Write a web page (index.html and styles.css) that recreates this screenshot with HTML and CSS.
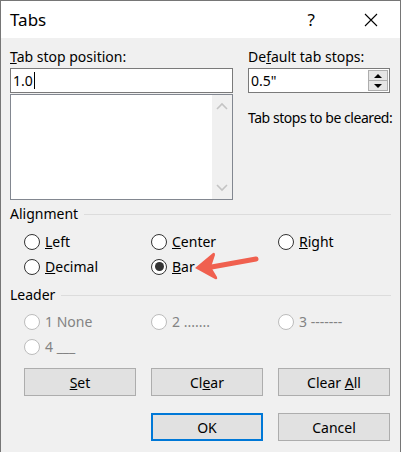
FILE: index.html
```html
<!DOCTYPE html>
<html>
<head>
<meta charset="utf-8">
<link rel="stylesheet" href="styles.css">
</head>
<body>
<div class="dialog">
  <div class="titlebar">
    <span class="title">Tabs</span>
    <span class="help">?</span>
    <svg class="close" width="14" height="14" viewBox="0 0 14 14"><path d="M1 1 L13 13 M13 1 L1 13" stroke="#000" stroke-width="1.1" fill="none"/></svg>
  </div>
  <div class="content">
    <div class="top">
      <div class="col-left">
        <div class="label"><u>T</u>ab stop position:</div>
        <div class="textbox"><span>1.0</span><span class="caret"></span></div>
        <div class="listbox">
          <div class="list-area"></div>
          <div class="scrollbar">
            <svg width="12" height="8" viewBox="0 0 12 8"><path d="M1 7 L6 2 L11 7" stroke="#c4c4c4" stroke-width="1.6" fill="none"/></svg>
            <svg width="12" height="8" viewBox="0 0 12 8"><path d="M1 1 L6 6 L11 1" stroke="#c4c4c4" stroke-width="1.6" fill="none"/></svg>
          </div>
        </div>
      </div>
      <div class="col-right">
        <div class="label">De<u>f</u>ault tab stops:</div>
        <div class="spinbox">
          <span class="spin-value">0.5"</span>
          <div class="spin-buttons">
            <div class="spin-btn"><span class="tri-up"></span></div>
            <div class="spin-btn"><span class="tri-down"></span></div>
          </div>
        </div>
        <div class="cleared">Tab stops to be cleared:</div>
      </div>
    </div>

    <div class="group-header align-header"><span>Alignment</span><div class="rule"></div></div>
    <div class="radio-grid">
      <label class="radio"><span class="circle"></span><span><u>L</u>eft</span></label>
      <label class="radio"><span class="circle"></span><span><u>C</u>enter</span></label>
      <label class="radio"><span class="circle"></span><span><u>R</u>ight</span></label>
      <label class="radio"><span class="circle"></span><span><u>D</u>ecimal</span></label>
      <label class="radio"><span class="circle checked"></span><span><u>B</u>ar</span></label>
    </div>

    <div class="group-header leader-header"><span>Leader</span><div class="rule"></div></div>
    <div class="radio-grid disabled">
      <label class="radio"><span class="circle"></span><span>1 None</span></label>
      <label class="radio"><span class="circle"></span><span>2 .......</span></label>
      <label class="radio"><span class="circle"></span><span>3 -------</span></label>
      <label class="radio"><span class="circle"></span><span>4 ___</span></label>
    </div>

    <div class="button-grid row1">
      <div class="btn"><span><u>S</u>et</span></div>
      <div class="btn"><span>Cl<u>e</u>ar</span></div>
      <div class="btn"><span>Clear <u>A</u>ll</span></div>
    </div>
    <div class="button-grid row2">
      <div></div>
      <div class="btn default"><span>OK</span></div>
      <div class="btn"><span>Cancel</span></div>
    </div>
  </div>
  <svg class="arrow" width="80" height="40" viewBox="0 0 80 40">
    <path d="M66 10 L16 19" stroke="#f0604f" stroke-width="5" stroke-linecap="round" fill="none"/>
    <path d="M5 19 L23 4 Q25 3 25 6 L21 18 L27 28 Q28 31 25 30 Z" fill="#f0604f"/>
  </svg>
</div>
</body>
</html>
```

FILE: styles.css
```css
* { box-sizing: border-box; }
html, body { margin: 0; padding: 0; background: #f0f0f0; }
body {
  font-family: "Noto Sans", "Open Sans", sans-serif;
  font-size: 14px;
  color: #000;
}
.dialog {
  position: relative;
  width: 401px;
  height: 452px;
  border: 1px solid #767676;
  border-bottom: none;
  background: #f0f0f0;
  overflow: hidden;
}
.titlebar {
  height: 37px;
  background: #fff;
  display: flex;
  align-items: center;
  padding-left: 9px;
}
.title { font-size: 17px; flex: 1; }
.help { font-size: 17px; margin-right: 49px; }
.close { margin-right: 22px; }

.content { padding: 10px 9px 0 9px; }
.top { display: flex; gap: 15px; }
.col-left { width: 223px; }
.col-right { width: 142px; }
.label { height: 18px; line-height: 18px; margin-bottom: 2px; }
.textbox {
  height: 25px;
  background: #fff;
  border: 1px solid #7a7a7a;
  display: flex;
  align-items: center;
  padding-left: 2px;
}
.caret { display: inline-block; width: 1px; height: 17px; background: #000; margin-left: 1px; }
.listbox {
  margin-top: 1px;
  height: 106px;
  border: 1px solid #828790;
  background: #fff;
  display: flex;
}
.list-area { flex: 1; }
.scrollbar {
  width: 20px;
  background: #f0f0f0;
  display: flex;
  flex-direction: column;
  justify-content: space-between;
  align-items: center;
  padding: 7px 0 7px;
}
.spinbox {
  height: 25px;
  background: #fff;
  border: 1px solid #7a7a7a;
  display: flex;
  align-items: center;
  padding-left: 2px;
}
.spin-value { flex: 1; }
.spin-buttons {
  width: 21px;
  height: 23px;
  display: flex;
  flex-direction: column;
  padding: 1px 1px 1px 0;
}
.spin-btn {
  flex: 1;
  background: #e5e5e5;
  border: 1px solid #adadad;
  display: flex;
  align-items: center;
  justify-content: center;
}
.spin-btn + .spin-btn { border-top: none; }
.tri-up { width: 0; height: 0; border-left: 4px solid transparent; border-right: 4px solid transparent; border-bottom: 4px solid #000; }
.tri-down { width: 0; height: 0; border-left: 4px solid transparent; border-right: 4px solid transparent; border-top: 4px solid #000; }
.cleared { margin-top: 16px; line-height: 18px; white-space: nowrap; letter-spacing: -0.45px; }

.group-header {
  display: flex;
  align-items: center;
  height: 18px;
  line-height: 18px;
  gap: 6px;
}
.group-header .rule { flex: 1; border-top: 1px solid #dcdcdc; }
.align-header { margin-top: 5px; }
.leader-header { margin-top: 7px; }

.radio-grid {
  display: grid;
  grid-template-columns: 112px 112px 112px;
  column-gap: 15px;
  grid-auto-rows: 25px;
  padding-left: 14px;
  margin-top: 6px;
}
.leader-header + .radio-grid { margin-top: 5px; }
.radio { display: flex; align-items: center; gap: 5px; }
.circle {
  width: 16px;
  height: 16px;
  border-radius: 50%;
  border: 1px solid #333;
  background: #fff;
  display: flex;
  align-items: center;
  justify-content: center;
}
.circle.checked::after {
  content: "";
  width: 9px;
  height: 9px;
  border-radius: 50%;
  background: #333;
}
.disabled .radio { color: #838383; }
.disabled .circle { border-color: #bcbcbc; }

.button-grid {
  display: grid;
  grid-template-columns: 112px 112px 112px;
  column-gap: 15px;
  padding-left: 14px;
}
.row1 { margin-top: 9px; }
.row2 { margin-top: 17px; }
.btn {
  height: 28px;
  background: #e1e1e1;
  border: 1px solid #adadad;
  display: flex;
  align-items: center;
  justify-content: center;
}
.btn.default { border: 2px solid #0078d7; }

.arrow { position: absolute; left: 189px; top: 248px; }
```
